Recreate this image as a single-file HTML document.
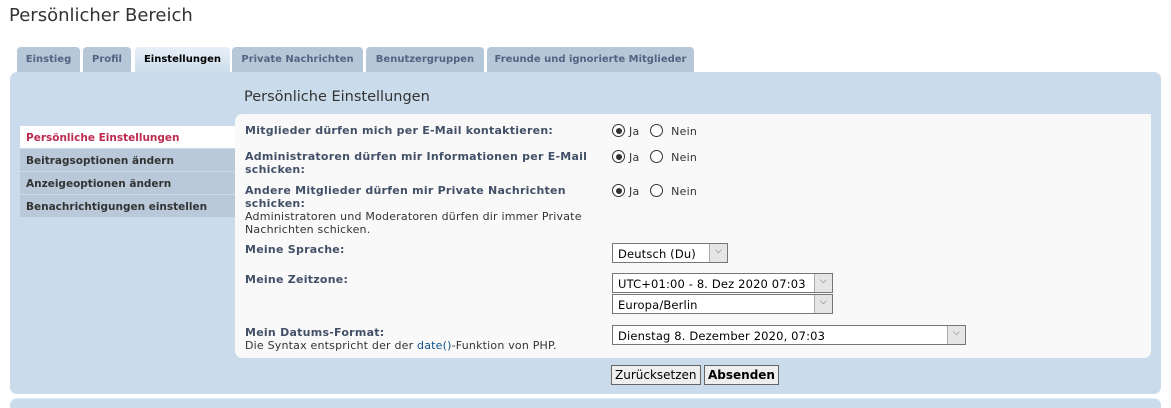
<!DOCTYPE html>
<html><head><meta charset="utf-8"><style>
*{margin:0;padding:0;box-sizing:border-box}
body{width:1171px;height:401px;background:#fff;font-family:Verdana,"DejaVu Sans",sans-serif;color:#333;position:relative;overflow:hidden;font-size:11px}
.a{position:absolute;white-space:nowrap}
h2{position:absolute;left:9px;top:5px;font-size:18px;font-weight:normal;color:#333}
.tab{position:absolute;top:47px;height:25px;background:#b6c8d8;border-radius:4px 4px 0 0;color:#536482;font-weight:bold;font-size:10px;text-align:center;line-height:26px}
.tab.on{background:linear-gradient(#e8f0f8,#cadceb);color:#000;height:27px}
.panel{position:absolute;left:10px;top:72px;width:1151px;height:322px;background:#cadceb;border-radius:7px}
.inner{position:absolute;left:235px;top:114px;width:916px;height:244px;background:#f9f9f9;border-radius:7px 0 7px 7px}
.menu{position:absolute;left:20px;width:215px;height:22px;background:#b9c9d9;font-weight:bold;font-size:10.5px;color:#333;padding:6px 0 0 6px}
.lab{position:absolute;left:245px;font-weight:bold;color:#425067;font-size:11px;line-height:13px;letter-spacing:0.25px}
.lab span{letter-spacing:0.2px}
.rad{position:absolute;left:612px;font-size:11px;color:#333;letter-spacing:0.2px}
.r{display:inline-block;width:13px;height:13px;border:1px solid #333;border-radius:50%;vertical-align:-2px;position:relative;background:#fff;margin-right:4px}
.r.on::after{content:"";position:absolute;left:2.5px;top:2.5px;width:6px;height:6px;border-radius:50%;background:#333}
.sel{position:absolute;left:612px;height:20px;border:1px solid #777;background:#fff;font-size:11.5px;padding:3px 0 0 5px;color:#000;letter-spacing:0.15px}
.sel::after{content:"⌵";position:absolute;right:0;top:0;width:17px;height:18px;border-left:1px solid #aaa;background:#e5e5e5;font-size:9px;text-align:center;line-height:14px;color:#555}
.btn{position:absolute;top:365px;height:20px;border:1px solid #666;background:#eee;font-size:12px;padding:2px 3px 0;color:#000}
</style></head><body>
<h2>Persönlicher Bereich</h2>
<div class="tab" style="left:17px;width:63px">Einstieg</div>
<div class="tab" style="left:83px;width:48px">Profil</div>
<div class="tab" style="left:232px;width:131px">Private Nachrichten</div>
<div class="tab" style="left:366px;width:118px">Benutzergruppen</div>
<div class="tab" style="left:487px;width:207px">Freunde und ignorierte Mitglieder</div>
<div class="panel"></div>
<div class="tab on" style="left:135px;width:95px">Einstellungen</div>
<div class="a" style="left:244px;top:89px;font-size:14.5px;color:#333">Persönliche Einstellungen</div>
<div class="inner"></div>
<div class="menu" style="top:126px;background:#fff;color:#bc2a4d">Persönliche Einstellungen</div>
<div class="menu" style="top:149px">Beitragsoptionen ändern</div>
<div class="menu" style="top:172px">Anzeigeoptionen ändern</div>
<div class="menu" style="top:195px">Benachrichtigungen einstellen</div>
<div class="lab" style="top:124px">Mitglieder dürfen mich per E-Mail kontaktieren:</div>
<div class="rad" style="top:124px"><span class="r on"></span>Ja &nbsp;&nbsp;<span class="r"></span> Nein</div>
<div class="lab" style="top:150px">Administratoren dürfen mir Informationen per E-Mail<br>schicken:</div>
<div class="rad" style="top:150px"><span class="r on"></span>Ja &nbsp;&nbsp;<span class="r"></span> Nein</div>
<div class="lab" style="top:184px">Andere Mitglieder dürfen mir Private Nachrichten<br>schicken:<br><span style="font-weight:normal;color:#333">Administratoren und Moderatoren dürfen dir immer Private<br>Nachrichten schicken.</span></div>
<div class="rad" style="top:184px"><span class="r on"></span>Ja &nbsp;&nbsp;<span class="r"></span> Nein</div>
<div class="lab" style="top:243px">Meine Sprache:</div>
<div class="sel" style="top:243px;width:116px">Deutsch (Du)</div>
<div class="lab" style="top:273px">Meine Zeitzone:</div>
<div class="sel" style="top:273px;width:221px">UTC+01:00 - 8. Dez 2020 07:03</div>
<div class="sel" style="top:294px;width:221px">Europa/Berlin</div>
<div class="lab" style="top:326px">Mein Datums-Format:<br><span style="font-weight:normal;color:#333">Die Syntax entspricht der der <span style="color:#105289">date()</span>-Funktion von PHP.</span></div>
<div class="sel" style="top:325px;width:354px">Dienstag 8. Dezember 2020, 07:03</div>
<div class="btn" style="left:611px">Zurücksetzen</div>
<div class="btn" style="left:704px;font-weight:bold">Absenden</div>
<div style="position:absolute;left:10px;top:398px;width:1151px;height:10px;background:#cadceb;border-top:1px solid #e5edf5;border-radius:7px 7px 0 0"></div>
</body></html>
